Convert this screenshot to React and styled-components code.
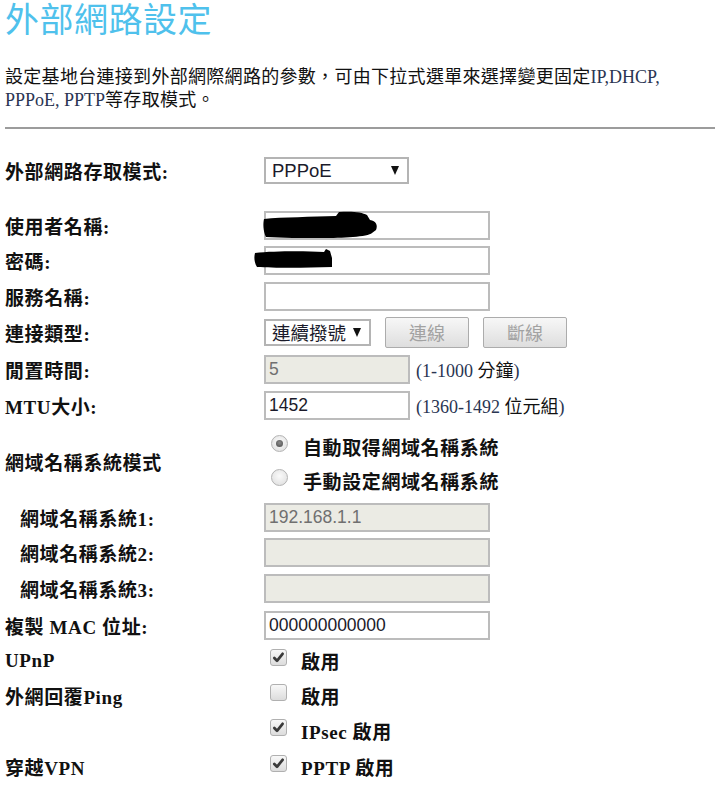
import styled, { createGlobalStyle } from "styled-components";

const serif = `"Liberation Serif", "Noto Sans CJK TC", serif`;
const sans = `"Liberation Sans", Arial, "Noto Sans CJK TC", sans-serif`;

const GlobalStyle = createGlobalStyle`
    body {
        margin: 0;
        background: #ffffff;
    }
`;

const Page = styled.div`
    width: 720px;
    box-sizing: border-box;
    padding: 0 5px;
    font-family: ${serif};
    color: #111;
`;

const Title = styled.h1`
    margin: 0;
    font-family: ${sans};
    font-weight: normal;
    font-size: 34px;
    line-height: 40px;
    letter-spacing: 0.5px;
    color: #4fc1ec;
`;

const Desc = styled.p`
    margin: 26px 0 0;
    font-size: 18px;
    line-height: 23px;
    letter-spacing: 0.3px;
    color: #111;
`;

const Latin = styled.span`
    color: #2a3552;
    letter-spacing: 0;
`;

const Rule = styled.div`
    margin-top: 15px;
    height: 2px;
    background: #9c9c9c;
`;

const Form = styled.div`
    display: flex;
    flex-direction: column;
    margin-top: 23px;
`;

const Row = styled.div`
    display: grid;
    grid-template-columns: 259px 1fr;
    align-items: center;
    height: ${(p) => p.$h}px;
    margin-top: ${(p) => p.$mt || 0}px;
`;

const Label = styled.div`
    padding-left: ${(p) => p.$indent || 0}px;
    font-size: 19px;
    font-weight: bold;
    letter-spacing: 0.6px;
    white-space: nowrap;
`;

const Field = styled.div`
    display: flex;
    align-items: center;
    gap: ${(p) => p.$gap || 0}px;
`;

const InputWrap = styled.div`
    position: relative;
    display: flex;
`;

const TextInput = styled.input`
    box-sizing: border-box;
    width: ${(p) => p.$w || 226}px;
    height: 29px;
    margin: 0;
    padding: 0 3px;
    border: 2px solid #bcbcbc;
    border-radius: 0;
    outline: none;
    background: #ffffff;
    font-family: ${sans};
    font-size: 17.5px;
    color: #1a1a2a;

    &:disabled {
        background: #ebebe4;
        color: #707070;
    }
`;

const Redact = styled.svg`
    position: absolute;
    left: ${(p) => p.$x}px;
    top: ${(p) => p.$y}px;
    pointer-events: none;
`;

const SelectBox = styled.div`
    box-sizing: border-box;
    width: ${(p) => p.$w}px;
    height: 27px;
    display: flex;
    align-items: center;
    justify-content: space-between;
    gap: 4px;
    padding: 0 8px 0 6px;
    border: 2px solid #b4b4b4;
    background: #ffffff;
    font-family: ${sans};
    font-size: 18.5px;
    color: #1b1b2b;
    white-space: nowrap;
`;

const Caret = styled.span`
    flex: none;
    width: 0;
    height: 0;
    border-left: 4.5px solid transparent;
    border-right: 4.5px solid transparent;
    border-top: 9px solid #111;
`;

const Button = styled.button`
    box-sizing: border-box;
    width: 84px;
    height: 31px;
    padding: 0;
    border: 1px solid #acacac;
    border-radius: 2px;
    background: linear-gradient(#f7f7f7, #dedede);
    font-family: ${sans};
    font-size: 18px;
    color: #a2a2a2;
`;

const Hint = styled.span`
    font-size: 18px;
    color: #111;
    white-space: nowrap;
`;

const Num = styled.span`
    color: #2a3552;
`;

const Options = styled.div`
    display: flex;
    flex-direction: column;
    padding-top: 4px;
`;

const OptionRow = styled.div`
    display: flex;
    align-items: center;
    height: 34px;
    gap: 15px;
    padding-left: 7px;
`;

const Radio = styled.span`
    box-sizing: border-box;
    width: 17px;
    height: 17px;
    margin-bottom: 5px;
    border-radius: 50%;
    border: 1px solid #b3b3b3;
    background: radial-gradient(circle at 50% 40%, #fafafa, #dcdcdc);
    display: flex;
    align-items: center;
    justify-content: center;

    &::after {
        content: "";
        display: ${(p) => (p.$on ? "block" : "none")};
        width: 7px;
        height: 7px;
        border-radius: 50%;
        background: radial-gradient(circle at 50% 40%, #8a8a8a, #4a4a4a);
    }
`;

const CheckRow = styled.div`
    display: flex;
    align-items: center;
    gap: 14px;
    padding-left: 6px;
`;

const Box = styled.span`
    box-sizing: border-box;
    width: 17px;
    height: 17px;
    margin-bottom: 6px;
    border-radius: 3px;
    border: 1px solid #b0b0b0;
    background: linear-gradient(#f8f8f8, #dcdcdc);
    display: flex;
    align-items: center;
    justify-content: center;
`;

const OptText = styled.span`
    font-size: 19px;
    font-weight: bold;
    letter-spacing: 0.6px;
    white-space: nowrap;
`;

function Check({ on }) {
    return (
        <Box>
            {on && (
                <svg width="13" height="13" viewBox="0 0 13 13">
                    <path d="M2.3 7 L5 9.8 L10.6 2.8" fill="none" stroke="#3a3a3a" strokeWidth="2.7" strokeLinecap="round" strokeLinejoin="round" />
                </svg>
            )}
        </Box>
    );
}

function CheckField({ on, children }) {
    return (
        <CheckRow>
            <Check on={on} />
            <OptText>{children}</OptText>
        </CheckRow>
    );
}

export default function App() {
    return (
        <Page>
            <GlobalStyle />
            <Title>外部網路設定</Title>
            <Desc>
                設定基地台連接到外部網際網路的參數，可由下拉式選單來選擇變更固定<Latin>IP,DHCP,</Latin>
                <br />
                <Latin>PPPoE, PPTP</Latin>等存取模式。
            </Desc>
            <Rule />

            <Form>
                <Row $h={37}>
                    <Label>外部網路存取模式:</Label>
                    <Field>
                        <SelectBox $w={145}>
                            PPPoE<Caret />
                        </SelectBox>
                    </Field>
                </Row>

                <Row $h={36} $mt={18}>
                    <Label>使用者名稱:</Label>
                    <InputWrap>
                        <TextInput type="text" defaultValue="" />
                        <Redact $x={-2} $y={0} width="120" height="30" viewBox="0 0 120 30">
                            <path d="M2 8 C20 6 50 6 74 5 L77 1 C90 0 100 1 105 4 L108 9 C114 10 116 14 114 19 L110 22 C106 26 80 27 60 27 C40 27 20 27 4 26 C1 20 1 12 2 8 Z" fill="#000" />
                        </Redact>
                    </InputWrap>
                </Row>

                <Row $h={35}>
                    <Label>密碼:</Label>
                    <InputWrap>
                        <TextInput type="text" defaultValue="" />
                        <Redact $x={-10} $y={2} width="82" height="22" viewBox="0 0 82 22">
                            <path d="M1 5 C20 3 50 3 70 4 L72 1 L76 3 L78 10 L78 19 C50 20 20 20 3 19 C0 14 0 9 1 5 Z" fill="#000" />
                        </Redact>
                    </InputWrap>
                </Row>

                <Row $h={36}>
                    <Label>服務名稱:</Label>
                    <Field>
                        <TextInput type="text" defaultValue="" />
                    </Field>
                </Row>

                <Row $h={36}>
                    <Label>連接類型:</Label>
                    <Field $gap={14}>
                        <SelectBox $w={107}>
                            連續撥號<Caret />
                        </SelectBox>
                        <Button type="button" disabled>連線</Button>
                        <Button type="button" disabled>斷線</Button>
                    </Field>
                </Row>

                <Row $h={38}>
                    <Label>閒置時間:</Label>
                    <Field $gap={6}>
                        <TextInput $w={146} type="text" defaultValue="5" disabled />
                        <Hint><Num>(1-1000 </Num>分鐘<Num>)</Num></Hint>
                    </Field>
                </Row>

                <Row $h={34}>
                    <Label>MTU大小:</Label>
                    <Field $gap={6}>
                        <TextInput $w={146} type="text" defaultValue="1452" />
                        <Hint><Num>(1360-1492 </Num>位元組<Num>)</Num></Hint>
                    </Field>
                </Row>

                <Row $h={78}>
                    <Label>網域名稱系統模式</Label>
                    <Options>
                        <OptionRow>
                            <Radio $on />
                            <OptText>自動取得網域名稱系統</OptText>
                        </OptionRow>
                        <OptionRow>
                            <Radio />
                            <OptText>手動設定網域名稱系統</OptText>
                        </OptionRow>
                    </Options>
                </Row>

                <Row $h={35}>
                    <Label $indent={15}>網域名稱系統1:</Label>
                    <Field>
                        <TextInput type="text" defaultValue="192.168.1.1" disabled />
                    </Field>
                </Row>

                <Row $h={35}>
                    <Label $indent={15}>網域名稱系統2:</Label>
                    <Field>
                        <TextInput type="text" defaultValue="" disabled />
                    </Field>
                </Row>

                <Row $h={37}>
                    <Label $indent={15}>網域名稱系統3:</Label>
                    <Field>
                        <TextInput type="text" defaultValue="" disabled />
                    </Field>
                </Row>

                <Row $h={36}>
                    <Label>複製 MAC 位址:</Label>
                    <Field>
                        <TextInput type="text" defaultValue="000000000000" />
                    </Field>
                </Row>

                <Row $h={35}>
                    <Label>UPnP</Label>
                    <CheckField on>啟用</CheckField>
                </Row>

                <Row $h={35}>
                    <Label>外網回覆Ping</Label>
                    <CheckField>啟用</CheckField>
                </Row>

                <Row $h={35}>
                    <Label></Label>
                    <CheckField on>IPsec 啟用</CheckField>
                </Row>

                <Row $h={36}>
                    <Label>穿越VPN</Label>
                    <CheckField on>PPTP 啟用</CheckField>
                </Row>
            </Form>
        </Page>
    );
}
